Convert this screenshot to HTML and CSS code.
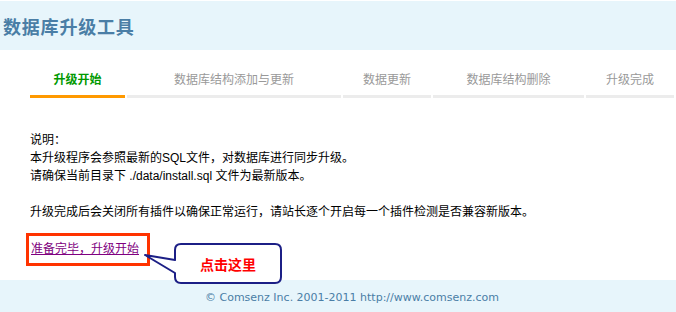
FILE: index.html
```html
<!DOCTYPE html>
<html lang="zh-CN">
<head>
<meta charset="utf-8">
<title>数据库升级工具</title>
<link rel="stylesheet" href="styles.css">
</head>
<body>
<div class="header">
  <h1 class="title">数据库升级工具</h1>
</div>
<div class="tabs">
  <div class="tab tab-active tab-w1">升级开始</div>
  <div class="tab tab-w2">数据库结构添加与更新</div>
  <div class="tab tab-w3">数据更新</div>
  <div class="tab tab-w4">数据库结构删除</div>
  <div class="tab tab-w5">升级完成</div>
</div>
<div class="content">
  <p class="para">说明：<br>本升级程序会参照最新的SQL文件，对数据库进行同步升级。<br>请确保当前目录下 ./data/install.sql 文件为最新版本。</p>
  <p class="para">升级完成后会关闭所有插件以确保正常运行，请站长逐个开启每一个插件检测是否兼容新版本。</p>
  <div class="go-row"><span class="go-box"><a class="go-link" href="#">准备完毕，升级开始</a></span></div>
</div>
<div class="footer">© Comsenz Inc. 2001-2011 http://www.comsenz.com</div>
<div class="callout">
  <svg class="callout-shape" width="150" height="52" viewBox="0 0 150 52">
    <path d="M41,6 H135 Q141,6 141,12 V39 Q141,45 135,45 H41 Q35,45 35,39 V35 L5,17 L35,22 V12 Q35,6 41,6 Z" fill="#ffffff" stroke="#1c1f86" stroke-width="2" stroke-linejoin="round"/>
  </svg>
  <div class="callout-label">点击这里</div>
</div>
</body>
</html>
```
FILE: styles.css
```css
html, body {
  margin: 0;
  padding: 0;
  background: #ffffff;
  overflow: hidden;
}
body {
  font-family: "Liberation Sans", "Noto Sans CJK SC", sans-serif;
  font-size: 12px;
  color: #000000;
}
.header {
  margin-top: 1px;
  height: 49px;
  background: #e7f5fb;
  display: flex;
  align-items: center;
}
.title {
  margin: 0 0 0 3px;
  font-family: "Noto Sans CJK SC", sans-serif;
  font-size: 18px;
  font-weight: bold;
  line-height: 20px;
  letter-spacing: 0.8px;
  color: #4a7ea6;
}
.tabs {
  display: flex;
  gap: 2px;
  margin: 20px 0 0 30px;
}
.tab {
  font-family: "Noto Sans CJK SC", sans-serif;
  font-size: 12px;
  line-height: 18px;
  padding-bottom: 7px;
  border-bottom: 3px solid #ececec;
  text-align: center;
  color: #999999;
}
.tab-active {
  border-bottom-color: #ff9900;
  color: #009900;
  font-weight: bold;
}
.tab-w1 { width: 95px; }
.tab-w2 { width: 214px; }
.tab-w3 { width: 88px; }
.tab-w4 { width: 151px; }
.tab-w5 { width: 88px; }
.content {
  padding: 33px 0 0 30px;
}
.para {
  margin: 0 0 18px 0;
  line-height: 18px;
}
.go-row {
  margin: -6px 0 0 -4px;
  height: 33px;
}
.go-box {
  display: inline-block;
  border: 3px solid #ff3300;
  height: 27px;
  line-height: 27px;
  padding: 0 8px 0 2px;
}
.go-link {
  color: #800080;
  text-decoration: underline;
}
.footer {
  margin-top: 14px;
  height: 32px;
  box-sizing: border-box;
  padding: 11px 0 0 28px;
  background: #e7f5fb;
  text-align: center;
  font-family: "DejaVu Sans", sans-serif;
  font-size: 11px;
  line-height: 14px;
  color: #4a7ea6;
}
.callout {
  position: absolute;
  left: 140px;
  top: 238px;
  width: 150px;
  height: 52px;
}
.callout-shape {
  position: absolute;
  left: 0;
  top: 0;
}
.callout-label {
  position: absolute;
  left: 35px;
  top: 6px;
  width: 106px;
  height: 40px;
  display: flex;
  align-items: center;
  justify-content: center;
  font-family: "Noto Sans CJK SC", sans-serif;
  font-size: 14px;
  font-weight: bold;
  color: #ff0000;
}
```
